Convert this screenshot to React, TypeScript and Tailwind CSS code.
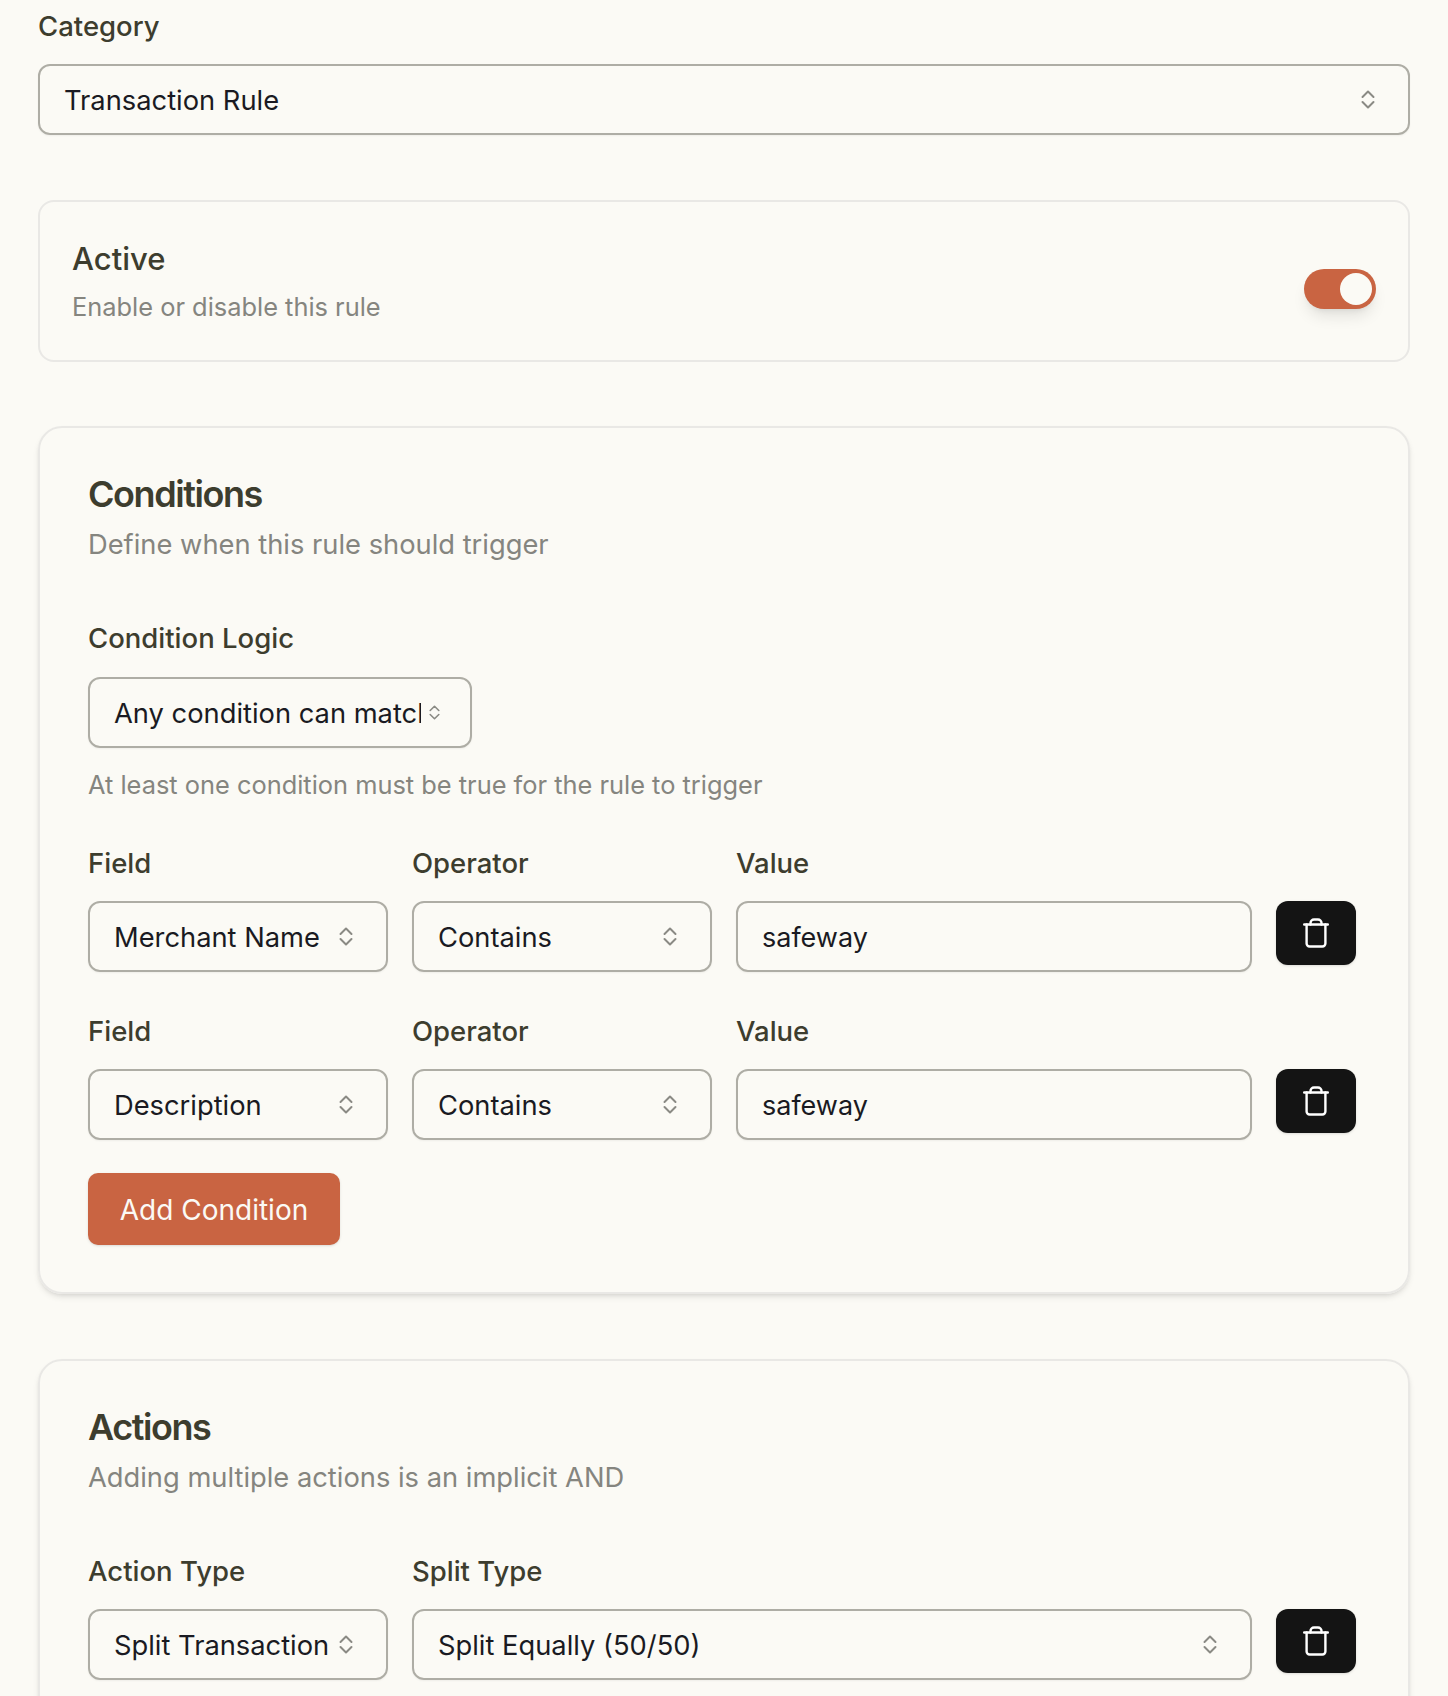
const ink = 'text-[#3d3d2e]';

const UpDownIcon = ({ className = 'w-[14px] h-[21px]' }: { className?: string }) => (
  <svg viewBox="0 0 14 21" fill="none" stroke="#8a8a84" strokeWidth="2" strokeLinecap="round" strokeLinejoin="round" className={className}>
    <path d="M1.5 8 7 2.5 12.5 8" />
    <path d="M1.5 13 7 18.5 12.5 13" />
  </svg>
);

const TrashIcon = () => (
  <svg viewBox="0 0 26 30" fill="none" stroke="#fff" strokeWidth="2.4" strokeLinecap="round" strokeLinejoin="round" className="w-[26px] h-[30px]">
    <path d="M1.2 6.5H24.8" />
    <path d="M3.6 6.5V25.5a3 3 0 0 0 3 3h12.8a3 3 0 0 0 3-3V6.5" />
    <path d="M7.5 6.5V5a3.5 3.5 0 0 1 3.5-3.5h4A3.5 3.5 0 0 1 18.5 5v1.5" />
  </svg>
);

const Label = ({ children }: { children: string }) => (
  <div className={`h-[36px] pt-[2px] flex items-center text-[27.5px] font-medium ${ink}`}>{children}</div>
);

const Select = ({ value, tight }: { value: string; tight?: boolean }) => (
  <div className={`h-[71px] flex items-center justify-between gap-2 pl-[24px] ${tight ? 'pr-[30px]' : 'pr-[33px]'} border-2 border-[#aeada5] rounded-[12px] shadow-xs text-[27.3px] text-[#1a1a22]`}>
    <span className="pt-[4px] overflow-hidden whitespace-nowrap min-w-0">{value}</span>
    {tight ? <UpDownIcon className="w-[11px] h-[17px] shrink-0" /> : <UpDownIcon className="w-[14px] h-[21px] shrink-0" />}
  </div>
);

const TrashButton = () => (
  <button className="w-full h-[64px] flex items-center justify-center rounded-[12px] bg-[#141414] shadow-sm">
    <TrashIcon />
  </button>
);

const ConditionRow = ({ field }: { field: string }) => (
  <div className="grid grid-cols-[300px_300px_516px_80px] gap-x-[24px]">
    <div>
      <Label>Field</Label>
      <div className="mt-[20px]"><Select value={field} /></div>
    </div>
    <div>
      <Label>Operator</Label>
      <div className="mt-[20px]"><Select value="Contains" /></div>
    </div>
    <div>
      <Label>Value</Label>
      <div className="mt-[20px] h-[71px] flex items-center px-[24px] pt-[4px] border-2 border-[#aeada5] rounded-[12px] shadow-xs text-[27px] text-[#1a1a22]">safeway</div>
    </div>
    <div className="pt-[56px]">
      <TrashButton />
    </div>
  </div>
);

const SectionCard = ({ title, sub, children, pad }: { title: string; sub: string; children: React.ReactNode; pad: string }) => (
  <section className={`border-2 border-[#e9e8e5] rounded-[24px] shadow-md px-[48px] pt-[42px] ${pad}`}>
    <h2 className={`text-[36px] leading-[48px] font-semibold tracking-[-0.04em] ${ink}`}>{title}</h2>
    <p className="mt-[9px] text-[27.3px] leading-[36px] text-[#85857f]">{sub}</p>
    {children}
  </section>
);

export default function App() {
  return (
    <div className="h-[1696px] overflow-hidden bg-[#fbfaf5] pl-[38px] pr-[38px] font-['Inter',sans-serif]">
      <div className="pt-[8px]">
        <Label>Category</Label>
      </div>
      <div className="mt-[20px]">
        <Select value="Transaction Rule" />
      </div>

      <div className="mt-[65px] h-[162px] flex items-center justify-between border-2 border-[#e9e8e5] rounded-[16px] pl-[32px] pr-[32px]">
        <div className="pt-[2px]">
          <div className={`text-[31px] leading-[40px] font-medium ${ink}`}>Active</div>
          <div className="mt-[10px] text-[25.4px] leading-[36px] text-[#85857f]">Enable or disable this rule</div>
        </div>
        <div className="mt-[16px] w-[72px] h-[40px] rounded-full bg-[#c96442] flex items-center justify-end pr-[4px] shadow-lg">
          <div className="w-[32px] h-[32px] rounded-full bg-[#fbfaf5]" />
        </div>
      </div>

      <div className="mt-[64px]">
        <SectionCard title="Conditions" sub="Define when this rule should trigger" pad="pb-[47px]">
          <div className="mt-[57px]">
            <Label>Condition Logic</Label>
          </div>
          <div className="mt-[21px] w-[384px]">
            <Select value="Any condition can match" tight />
          </div>
          <p className="mt-[19px] text-[25.4px] leading-[36px] text-[#85857f]">At least one condition must be true for the rule to trigger</p>
          <div className="mt-[42px]">
            <ConditionRow field="Merchant Name" />
          </div>
          <div className="mt-[41px]">
            <ConditionRow field="Description" />
          </div>
          <button className="block mt-[33px] pt-[2px] w-[252px] h-[72px] rounded-[10px] bg-[#c96442] text-[28px] font-normal text-[#fbfaf5] shadow-sm">Add Condition</button>
        </SectionCard>
      </div>

      <div className="mt-[65px]">
        <SectionCard title="Actions" sub="Adding multiple actions is an implicit AND" pad="pb-[120px]">
          <div className="mt-[57px] grid grid-cols-[300px_840px_80px] gap-x-[24px]">
            <div>
              <Label>Action Type</Label>
              <div className="mt-[20px]"><Select value="Split Transaction" /></div>
            </div>
            <div>
              <Label>Split Type</Label>
              <div className="mt-[20px]"><Select value="Split Equally (50/50)" /></div>
            </div>
            <div className="pt-[56px]">
              <TrashButton />
            </div>
          </div>
        </SectionCard>
      </div>
    </div>
  );
}
